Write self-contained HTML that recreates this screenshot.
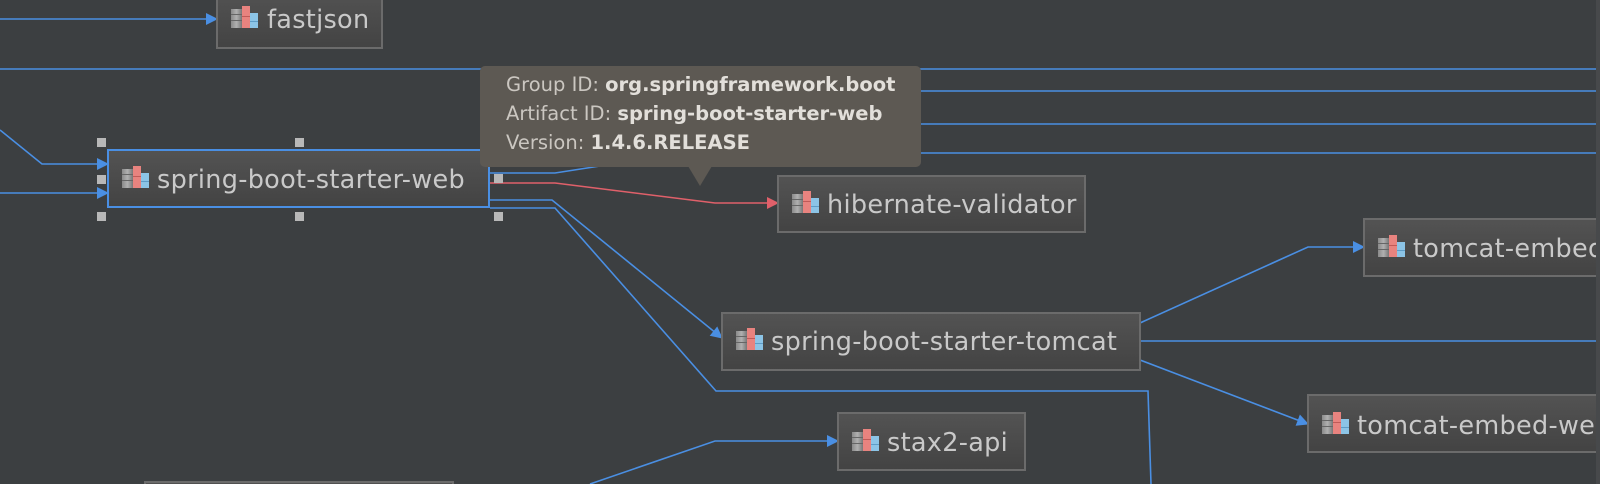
<!DOCTYPE html>
<html><head><meta charset="utf-8"><style>
html,body{margin:0;padding:0;background:#3c3f41;overflow:hidden;width:1600px;height:484px}
svg{display:block}
.nt{font-family:"DejaVu Sans","Liberation Sans",sans-serif;font-size:25.5px;fill:#c9c9c9;letter-spacing:0.3px}
.tt{font-family:"DejaVu Sans","Liberation Sans",sans-serif;font-size:19.5px;fill:#cbc7c1}
.tb{font-weight:bold;fill:#e2dfda}
</style></head><body>
<svg width="1600" height="484" viewBox="0 0 1600 484" xmlns="http://www.w3.org/2000/svg">
<defs>
<linearGradient id="ng" x1="0" y1="0" x2="0" y2="1">
<stop offset="0" stop-color="#535353"/><stop offset="1" stop-color="#434343"/>
</linearGradient>
<linearGradient id="gr" x1="0" y1="0" x2="1" y2="0">
<stop offset="0" stop-color="#8a8a8a"/><stop offset="0.5" stop-color="#b0b0b0"/><stop offset="1" stop-color="#777"/>
</linearGradient>
<marker id="ab" markerWidth="12" markerHeight="12" refX="11" refY="6" orient="auto" markerUnits="userSpaceOnUse"><path d="M0,0 L12,6 L0,12 z" fill="#4a8fe3"/></marker>
<marker id="ar" markerWidth="12" markerHeight="12" refX="11" refY="6" orient="auto" markerUnits="userSpaceOnUse"><path d="M0,0 L12,6 L0,12 z" fill="#e0606a"/></marker>
<symbol id="ic" viewBox="0 0 27 22" width="27" height="22">
<rect x="0" y="3" width="11" height="19" fill="url(#gr)"/>
<rect x="0" y="8" width="11" height="1" fill="#666"/><rect x="0" y="14" width="11" height="1" fill="#666"/>
<rect x="11" y="0" width="8" height="22" fill="#e8837f"/>
<rect x="11" y="10" width="8" height="1" fill="#c05a58"/>
<rect x="19" y="7" width="8" height="15" fill="#8cc4e6"/>
<rect x="19" y="15" width="8" height="1" fill="#5e9cc6"/>
</symbol>
</defs>
<rect width="1600" height="484" fill="#3c3f41"/>
<g fill="none" stroke="#4a8fe3" stroke-width="1.6">
<path d="M0,19 H217" marker-end="url(#ab)"/>
<path d="M0,69 H1596"/>
<path d="M880,91 H1596"/><path d="M880,124 H1596"/><path d="M880,153 H1596"/>
<path d="M0,130 L42,164 H108" marker-end="url(#ab)"/>
<path d="M0,193 H108" marker-end="url(#ab)"/>
<path d="M490,173 H555 L600,166"/>
<path d="M490,200 H552 L722,338" marker-end="url(#ab)"/>
<path d="M490,208 H555 L716,391 H1148 L1151,484"/>
<path d="M1140,323 L1308,247 H1364" marker-end="url(#ab)"/>
<path d="M1140,341 H1596"/>
<path d="M1140,360 L1308,424" marker-end="url(#ab)"/>
<path d="M590,484 L715,441 H838" marker-end="url(#ab)"/>
</g>
<path d="M490,183 H555 L715,203 H778" fill="none" stroke="#e0606a" stroke-width="1.6" marker-end="url(#ar)"/>
<g stroke="#6b6b6b" stroke-width="2" fill="url(#ng)">
<rect x="217" y="-10" width="165" height="58"/>
<rect x="778" y="176" width="307" height="56"/>
<rect x="722" y="313" width="418" height="57"/>
<rect x="1364" y="219" width="240" height="57"/>
<rect x="1308" y="395" width="296" height="57"/>
<rect x="838" y="413" width="187" height="57"/>
<rect x="145" y="482" width="308" height="10"/>
</g>
<rect x="108" y="150" width="381" height="57" fill="url(#ng)" stroke="#4a8fe3" stroke-width="2"/>
<g fill="#b8b8b8">
<rect x="97" y="138" width="9" height="9"/><rect x="295" y="138" width="9" height="9"/>
<rect x="97" y="175" width="9" height="9"/><rect x="494" y="174" width="9" height="9"/>
<rect x="97" y="212" width="9" height="9"/><rect x="295" y="212" width="9" height="9"/><rect x="494" y="212" width="9" height="9"/>
</g>
<use href="#ic" x="231" y="6"/><text class="nt" x="267" y="28">fastjson</text>
<use href="#ic" x="122" y="166"/><text class="nt" x="157" y="188">spring-boot-starter-web</text>
<use href="#ic" x="792" y="191"/><text class="nt" x="827" y="213">hibernate-validator</text>
<use href="#ic" x="736" y="328"/><text class="nt" x="771" y="350">spring-boot-starter-tomcat</text>
<use href="#ic" x="1378" y="235"/><text class="nt" x="1413" y="257">tomcat-embed-core</text>
<use href="#ic" x="1322" y="412"/><text class="nt" x="1357" y="434">tomcat-embed-websocket</text>
<use href="#ic" x="852" y="429"/><text class="nt" x="887" y="451">stax2-api</text>
<rect x="1596" y="0" width="4" height="484" fill="#47494b"/>
<rect x="480" y="66" width="441" height="101" rx="5" fill="#5d5953"/>
<path d="M688,166 L700,186 L712,166 z" fill="#5d5953"/>
<text class="tt" x="506" y="91">Group ID: <tspan class="tb">org.springframework.boot</tspan></text>
<text class="tt" x="506" y="120">Artifact ID: <tspan class="tb">spring-boot-starter-web</tspan></text>
<text class="tt" x="506" y="149">Version: <tspan class="tb">1.4.6.RELEASE</tspan></text>
</svg>
</body></html>
